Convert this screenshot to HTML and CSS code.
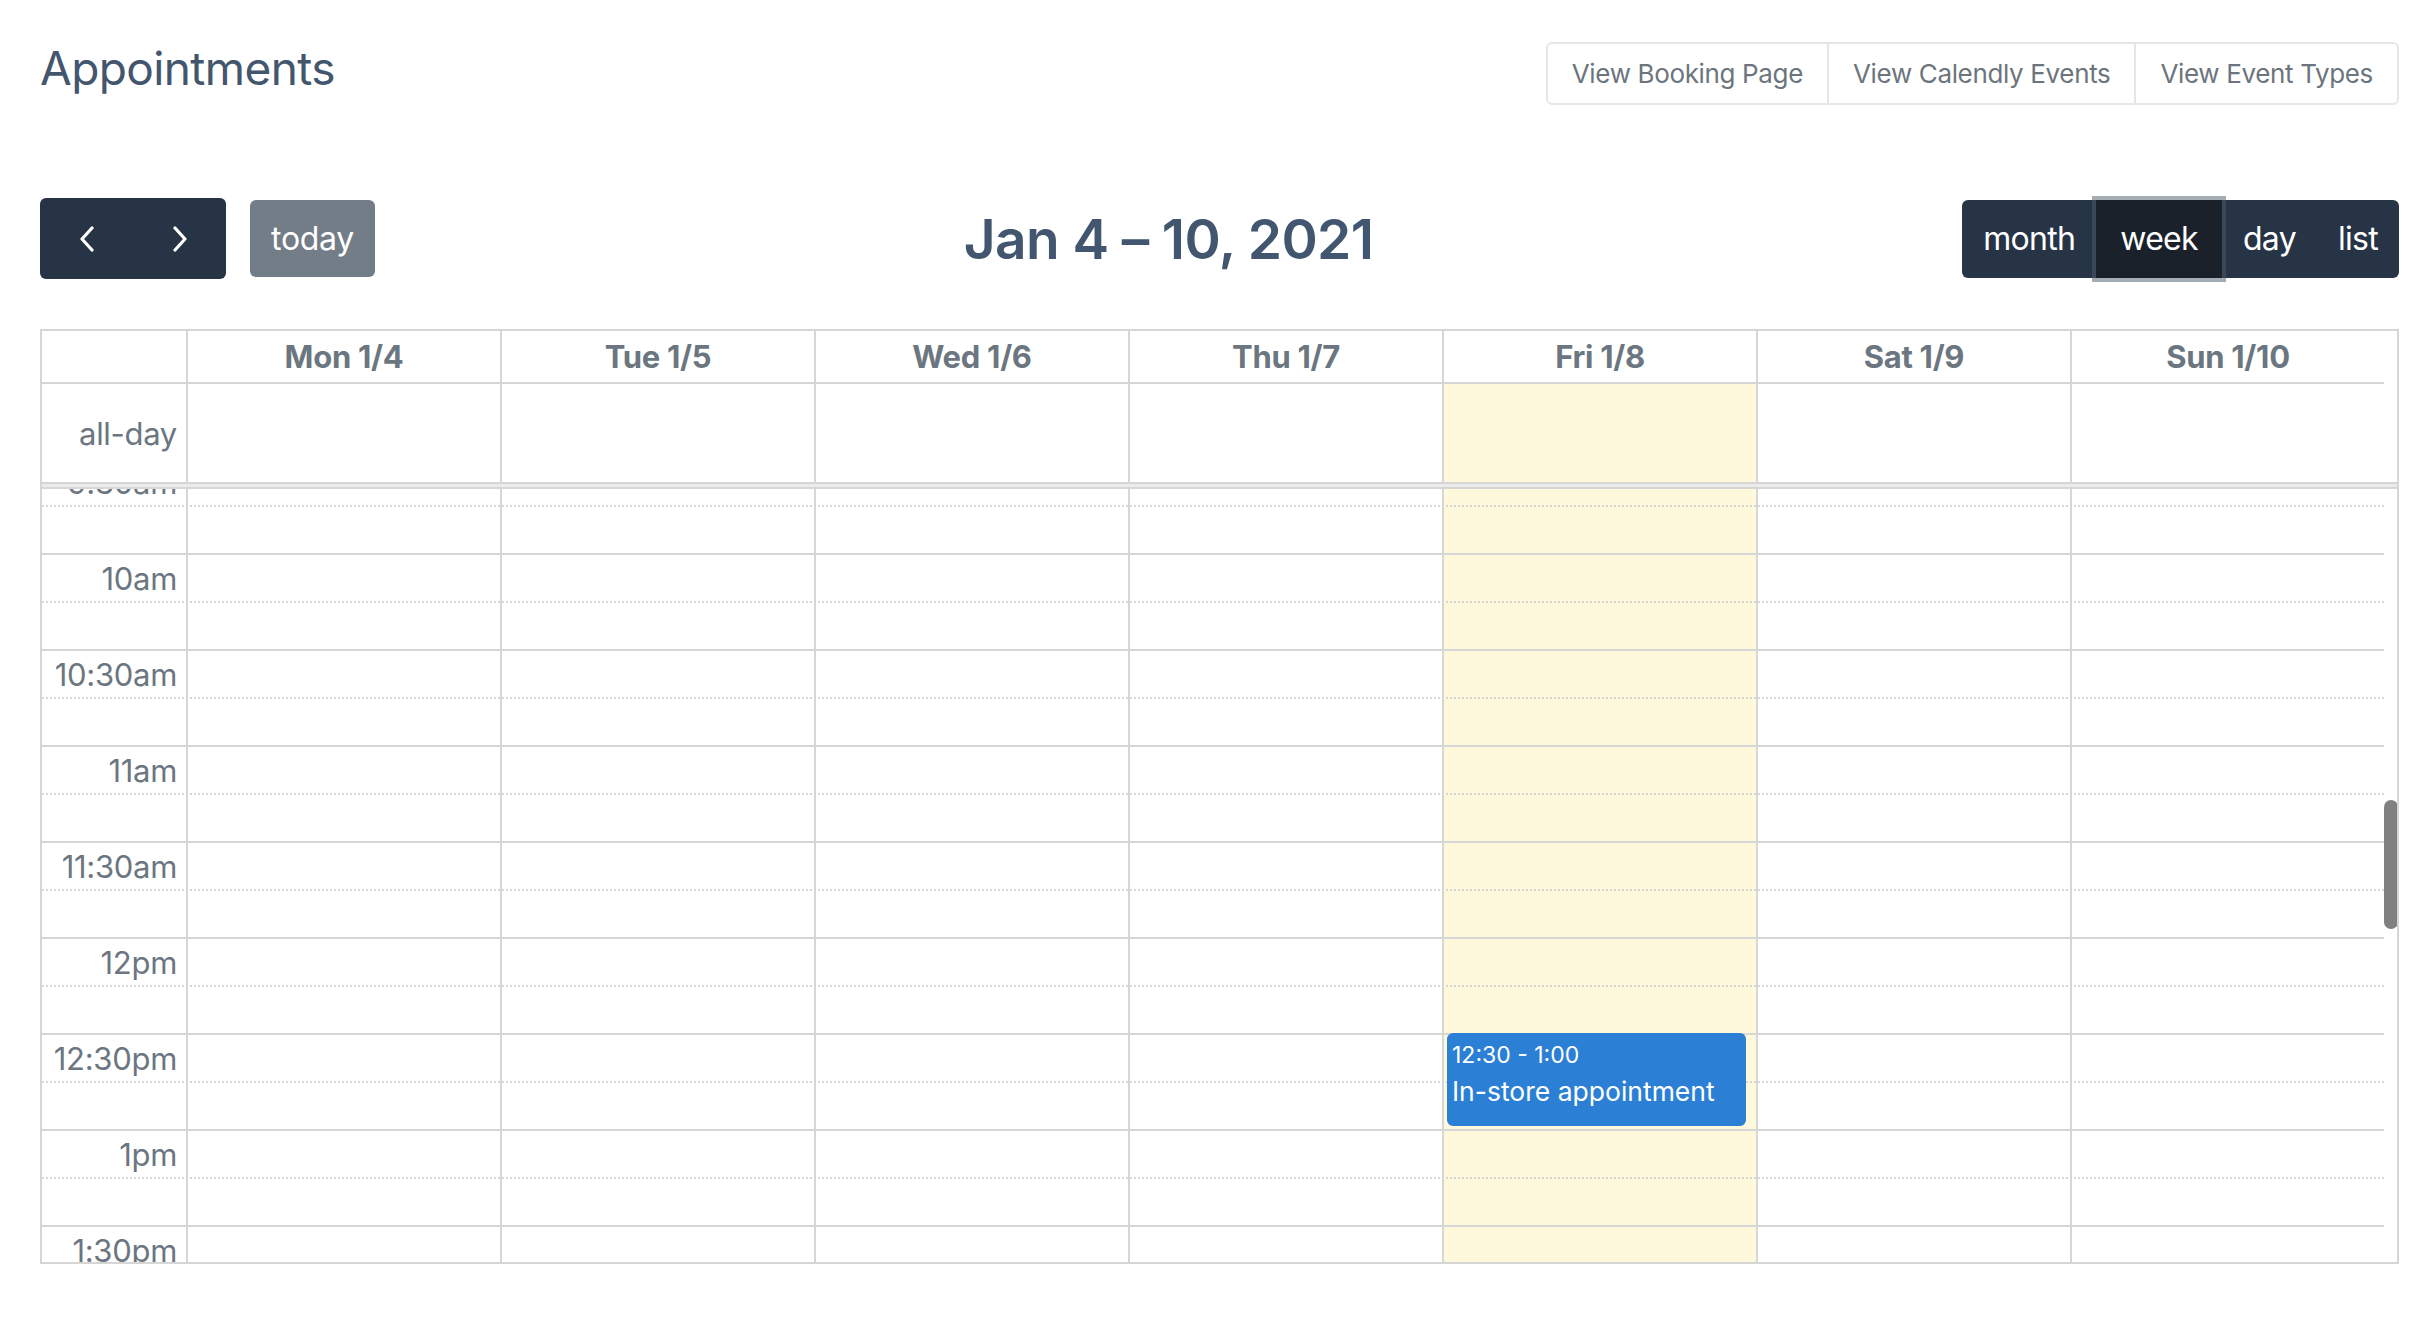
FILE: index.html
```html
<!DOCTYPE html>
<html lang="en">
<head>
<meta charset="utf-8">
<title>Appointments</title>
<link rel="stylesheet" href="styles.css">
</head>
<body>
<div class="page">
  <header class="page-head">
    <h1 class="page-title">Appointments</h1>
    <div class="link-group">
      <a class="link-btn">View Booking Page</a>
      <a class="link-btn">View Calendly Events</a>
      <a class="link-btn">View Event Types</a>
    </div>
  </header>

  <div class="toolbar">
    <div class="tb-chunk">
      <div class="btn-group nav-group">
        <button class="fc-btn icon-btn" aria-label="prev">
          <svg class="chev" viewBox="0 0 16 26" width="16" height="26"><path d="M13 2 L3 13 L13 24"/></svg>
        </button>
        <button class="fc-btn icon-btn" aria-label="next">
          <svg class="chev" viewBox="0 0 16 26" width="16" height="26"><path d="M3 2 L13 13 L3 24"/></svg>
        </button>
      </div>
      <button class="fc-btn today-btn">today</button>
    </div>
    <h2 class="tb-title">Jan 4 – 10, 2021</h2>
    <div class="btn-group view-group">
      <button class="fc-btn view-btn">month</button>
      <button class="fc-btn view-btn active">week</button>
      <button class="fc-btn view-btn">day</button>
      <button class="fc-btn view-btn">list</button>
    </div>
  </div>

  <div class="cal">
    <div class="cal-grid cal-head">
      <div class="hcell axis"></div>
      <div class="hcell day">Mon 1/4</div>
      <div class="hcell day">Tue 1/5</div>
      <div class="hcell day">Wed 1/6</div>
      <div class="hcell day">Thu 1/7</div>
      <div class="hcell day">Fri 1/8</div>
      <div class="hcell day">Sat 1/9</div>
      <div class="hcell day">Sun 1/10</div>
      <div class="hcell gutter"></div>
    </div>
    <div class="cal-grid cal-allday">
      <div class="acell axis">all-day</div>
      <div class="acell day"></div>
      <div class="acell day"></div>
      <div class="acell day"></div>
      <div class="acell day"></div>
      <div class="acell day today"></div>
      <div class="acell day"></div>
      <div class="acell day"></div>
      <div class="acell gutter"></div>
    </div>
    <div class="cal-divider"></div>
    <div class="cal-body">
      <div class="stack">
        <div class="cal-grid layer cols">
          <div class="col axis"></div>
          <div class="col day"></div>
          <div class="col day"></div>
          <div class="col day"></div>
          <div class="col day"></div>
          <div class="col day today"></div>
          <div class="col day"></div>
          <div class="col day"></div>
          <div class="col gutter"></div>
        </div>
        <div class="layer slots">
          <div class="slot major"><span class="slot-label">9:30am</span></div>
          <div class="slot minor"></div>
          <div class="slot major"><span class="slot-label">10am</span></div>
          <div class="slot minor"></div>
          <div class="slot major"><span class="slot-label">10:30am</span></div>
          <div class="slot minor"></div>
          <div class="slot major"><span class="slot-label">11am</span></div>
          <div class="slot minor"></div>
          <div class="slot major"><span class="slot-label">11:30am</span></div>
          <div class="slot minor"></div>
          <div class="slot major"><span class="slot-label">12pm</span></div>
          <div class="slot minor"></div>
          <div class="slot major"><span class="slot-label">12:30pm</span></div>
          <div class="slot minor"></div>
          <div class="slot major"><span class="slot-label">1pm</span></div>
          <div class="slot minor"></div>
          <div class="slot major"><span class="slot-label">1:30pm</span></div>
          <div class="slot minor"></div>
        </div>
        <div class="cal-grid layer events">
          <div class="event ev-fri ev-1230">
            <div class="ev-time">12:30 - 1:00</div>
            <div class="ev-title">In-store appointment</div>
          </div>
        </div>
      </div>
      <div class="scroll-thumb"></div>
    </div>
  </div>
</div>
</body>
</html>
```

FILE: styles.css
```css
* { box-sizing: border-box; }

html, body {
  margin: 0;
  padding: 0;
  background: #ffffff;
}

body {
  font-family: "Inter", "Liberation Sans", sans-serif;
  color: #6b7680;
}

.page {
  padding: 40px 23px 0 40px;
}

/* ---------- page header ---------- */
.page-head {
  display: flex;
  justify-content: space-between;
  align-items: flex-start;
  height: 65px;
}

.page-title {
  margin: 0;
  font-size: 46px;
  line-height: 56px;
  font-weight: 400;
  color: #43566d;
  letter-spacing: -0.6px;
}

.link-group {
  margin-top: 2px;
  display: flex;
  height: 63px;
  border: 2px solid #e4e6e8;
  border-radius: 6px;
}

.link-btn {
  display: block;
  padding: 0 24px;
  line-height: 59px;
  font-size: 26px;
  color: #6c757d;
  white-space: nowrap;
  letter-spacing: -0.35px;
}

.link-btn + .link-btn {
  border-left: 2px solid #e4e6e8;
}

/* ---------- toolbar ---------- */
.toolbar {
  margin-top: 93px;
  height: 81px;
  display: flex;
  justify-content: space-between;
  align-items: center;
}

.tb-chunk {
  display: flex;
  align-items: center;
  gap: 24px;
}

.btn-group {
  display: flex;
}

.fc-btn {
  margin: 0;
  border: 0;
  font-family: inherit;
  font-size: 32px;
  color: #ffffff;
  background: #273446;
  padding: 0 21px;
  cursor: pointer;
}

.nav-group .icon-btn {
  width: 93px;
  height: 81px;
  display: flex;
  align-items: center;
  justify-content: center;
  padding: 0;
}

.nav-group .icon-btn:first-child { border-radius: 6px 0 0 6px; }
.nav-group .icon-btn:last-child { border-radius: 0 6px 6px 0; }

.chev path {
  fill: none;
  stroke: #ffffff;
  stroke-width: 3.2;
  stroke-linecap: round;
  stroke-linejoin: round;
}

.today-btn {
  height: 77px;
  width: 125px;
  padding: 0;
  background: #737d87;
  border-radius: 6px;
  letter-spacing: -0.3px;
}

.tb-title {
  margin: 0;
  font-size: 55px;
  font-weight: 600;
  line-height: 1.2;
  color: #435670;
  letter-spacing: -0.6px;
}

.view-group {
  height: 78px;
}

.view-btn {
  height: 78px;
  letter-spacing: -0.7px;
}

.view-btn:first-child { border-radius: 6px 0 0 6px; }
.view-btn:last-child { border-radius: 0 6px 6px 0; }

.view-btn.active {
  background: #1b212b;
  padding: 0 24px;
  position: relative;
  box-shadow: 0 0 0 4px rgba(76, 91, 106, 0.5);
}

/* ---------- calendar ---------- */
.cal {
  margin-top: 50px;
  border: 2px solid #d6d6d6;
  height: 935px;
  display: flex;
  flex-direction: column;
}

.cal-grid {
  display: grid;
  grid-template-columns: 144px repeat(7, 1fr) 13px;
}

.hcell {
  height: 53px;
  line-height: 51px;
  border-bottom: 2px solid #d6d6d6;
  text-align: center;
  font-size: 31px;
  font-weight: 700;
  color: #6b7680;
  letter-spacing: -0.3px;
}

.hcell.day { border-left: 2px solid #d6d6d6; }
.hcell.gutter { border-bottom: 0; }

.acell {
  height: 98px;
}

.acell.day { border-left: 2px solid #d6d6d6; }
.acell.today { background: #fef8dd; }

.acell.axis {
  display: flex;
  align-items: center;
  justify-content: flex-end;
  padding-right: 9px;
  font-size: 31px;
  color: #6b7680;
  letter-spacing: -0.3px;
}

.cal-divider {
  height: 7px;
  border-top: 2px solid #d6d6d6;
  border-bottom: 2px solid #d6d6d6;
  background: #ebebeb;
}

.cal-body {
  position: relative;
  flex: 1;
  overflow: hidden;
}

.stack {
  display: grid;
  margin-top: -32px;
}

.layer {
  grid-area: 1 / 1;
}

.col.day { border-left: 2px solid #d6d6d6; }
.col.today { background: #fef8dd; }

.slots {
  margin-right: 13px;
  display: flex;
  flex-direction: column;
}

.slot {
  height: 48px;
  display: flex;
  align-items: center;
}

.slot.major { border-top: 2px solid #d6d6d6; }
.slot.minor { border-top: 2px dotted #d6d6d6; }

.slot-label {
  width: 144px;
  padding-right: 9px;
  text-align: right;
  font-size: 31px;
  color: #6b7680;
  letter-spacing: -0.3px;
}

.events {
  grid-template-rows: repeat(18, 48px);
}

.event {
  margin: 0 10px 3px 5px;
  background: #2b7fd4;
  border: 2px solid #2b7fd4;
  border-radius: 6px;
  color: #ffffff;
  padding: 5px 3px 3px;
  overflow: hidden;
}

.ev-fri { grid-column: 6; }
.ev-1230 { grid-row: 13 / 15; }

.ev-time {
  font-size: 23px;
  line-height: 30px;
  margin-bottom: 4px;
}

.ev-title {
  font-size: 26.5px;
  line-height: 34px;
  white-space: nowrap;
}

.scroll-thumb {
  position: absolute;
  right: -1px;
  top: 311px;
  width: 14px;
  height: 129px;
  border-radius: 7px;
  background: #808080;
}
```
